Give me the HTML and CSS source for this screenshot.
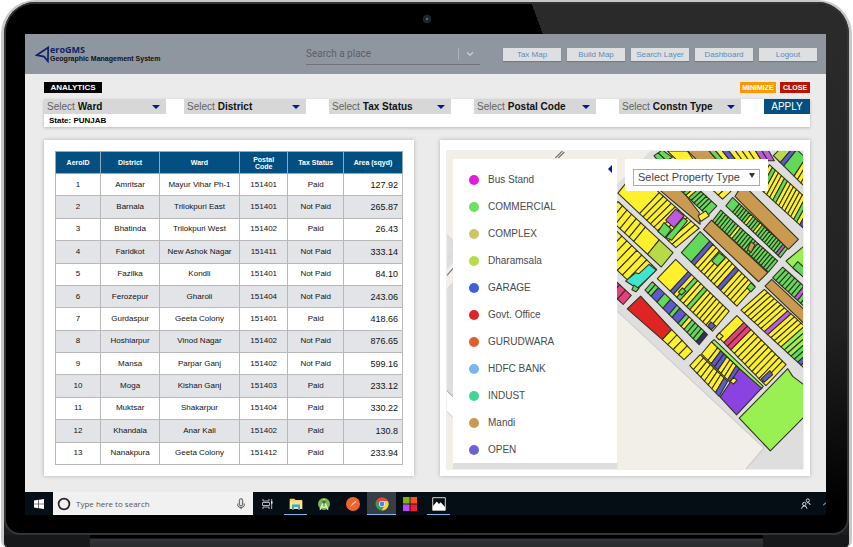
FILE: index.html
```html
<!DOCTYPE html>
<html lang="en">
<head>
<meta charset="utf-8">
<title>AeroGMS Analytics</title>
<link rel="stylesheet" href="styles.css">
</head>
<body>
<div class="laptop">
  <div class="bezel">
    <div class="camera-row"><span class="camera"></span></div>
    <div class="screen">
      <header class="topbar">
        <div class="brand">
          <svg class="brand-mark" viewBox="0 0 15 17" aria-hidden="true"><path d="M13.2 1.5 1.5 9.2l7.6 1.4 3.8 4.6z" fill="none" stroke="#0b2367" stroke-width="1.7"/></svg>
          <div class="brand-text"><strong>eroGMS</strong><span>Geographic Management System</span></div>
        </div>
        <div class="place-search">
          <input type="text" placeholder="Search a place" aria-label="Search a place">
          <button type="button" aria-label="Show places"><svg viewBox="0 0 8 6"><path d="M1 1.2 4 4.2 7 1.2" fill="none" stroke="#c9ccd1" stroke-width="1.4"/></svg></button>
        </div>
        <nav class="nav">
          <a href="#">Tax Map</a><a href="#">Build Map</a><a href="#">Search Layer</a><a href="#">Dashboard</a><a href="#">Logout</a>
        </nav>
      </header>

      <main class="content">
        <div class="title-row">
          <h1>ANALYTICS</h1>
          <div class="window-actions">
            <button type="button" class="minimize">MINIMIZE</button>
            <button type="button" class="close">CLOSE</button>
          </div>
        </div>

        <form class="filters">
          <div class="fields">
            <div class="field"><label for="ward">Select</label><select id="ward"><option>Ward</option></select><i class="arrow"></i></div>
            <div class="field"><label for="district">Select</label><select id="district"><option>District</option></select><i class="arrow"></i></div>
            <div class="field"><label for="tax">Select</label><select id="tax"><option>Tax Status</option></select><i class="arrow"></i></div>
            <div class="field"><label for="postal">Select</label><select id="postal"><option>Postal Code</option></select><i class="arrow"></i></div>
            <div class="field"><label for="constn">Select</label><select id="constn"><option>Constn Type</option></select><i class="arrow"></i></div>
            <button type="button" class="apply">APPLY</button>
          </div>
          <p class="state">State: PUNJAB</p>
        </form>

        <div class="cards">
          <section class="card table-card">
            <table>
              <colgroup><col class="c-id"><col class="c-district"><col class="c-ward"><col class="c-postal"><col class="c-tax"><col class="c-area"></colgroup>
              <thead><tr><th>AeroID</th><th>District</th><th>Ward</th><th>Postal<br>Code</th><th>Tax Status</th><th>Area (sqyd)</th></tr></thead>
              <tbody>
                <tr><td>1</td><td>Amritsar</td><td>Mayur Vihar Ph-1</td><td>151401</td><td>Paid</td><td>127.92</td></tr>
                <tr><td>2</td><td>Barnala</td><td>Trilokpuri East</td><td>151401</td><td>Not Paid</td><td>265.87</td></tr>
                <tr><td>3</td><td>Bhatinda</td><td>Trilokpuri West</td><td>151402</td><td>Paid</td><td>26.43</td></tr>
                <tr><td>4</td><td>Faridkot</td><td>New Ashok Nagar</td><td>151411</td><td>Not Paid</td><td>333.14</td></tr>
                <tr><td>5</td><td>Fazilka</td><td>Kondli</td><td>151401</td><td>Not Paid</td><td>84.10</td></tr>
                <tr><td>6</td><td>Ferozepur</td><td>Gharoli</td><td>151404</td><td>Not Paid</td><td>243.06</td></tr>
                <tr><td>7</td><td>Gurdaspur</td><td>Geeta Colony</td><td>151401</td><td>Paid</td><td>418.66</td></tr>
                <tr><td>8</td><td>Hoshiarpur</td><td>Vinod Nagar</td><td>151402</td><td>Not Paid</td><td>876.65</td></tr>
                <tr><td>9</td><td>Mansa</td><td>Parpar Ganj</td><td>151402</td><td>Not Paid</td><td>599.16</td></tr>
                <tr><td>10</td><td>Moga</td><td>Kishan Ganj</td><td>151403</td><td>Paid</td><td>233.12</td></tr>
                <tr><td>11</td><td>Muktsar</td><td>Shakarpur</td><td>151404</td><td>Paid</td><td>330.22</td></tr>
                <tr><td>12</td><td>Khandala</td><td>Anar Kali</td><td>151402</td><td>Paid</td><td>130.8</td></tr>
                <tr><td>13</td><td>Nanakpura</td><td>Geeta Colony</td><td>151412</td><td>Paid</td><td>233.94</td></tr>
              </tbody>
            </table>
          </section>

          <section class="card map-card">
            <div class="map">
              <svg class="map-drawing" viewBox="0 0 355 317" preserveAspectRatio="xMinYMin slice" role="img" aria-label="Property map">
                <rect width="355" height="317" fill="#dedede"/>
                <path d="M0 0H203L170 33V160L316 296 298 317H137L144 310H0V245L6 250V0z" fill="#f2efe9"/>
                <path d="M0 0H6V90L0 83zM0 118 6 112V132L0 138z" fill="#f2efe9"/>
                <path d="M0 84 6 89M0 107 6 101M0 138 6 132" stroke="#c8c8c8" fill="none"/>
                <path d="M0 77V84L6 89V102L0 107zM0 138 6 132V245L0 239z" fill="#dedede"/>
                <path d="M0 124 6 117M108 7 115 0M111 7 117 1" stroke="#777" stroke-width="1.2"/>
                <path d="M0 239 6 245V266L0 260z" fill="#fff"/><path d="M0 239 6 245M0 260 6 266" stroke="#aaa"/>
                <path d="M0 260 6 266V317H0z" fill="#f2efe9"/>
                <path d="M138 310H170V317H131z" fill="#dedede"/>
                <path d="M170 160 316 296 298 317" fill="none" stroke="#c9c9c9"/>
                <g id="parcels" transform="translate(163 -7) scale(.33333)" stroke="#30301c" stroke-width="3.2" stroke-linejoin="round"></g>
              </svg>
              <div class="legend">
                <button type="button" class="collapse" aria-label="Collapse legend"></button>
                <ul>
                  <li class="bus">Bus Stand</li>
                  <li class="commercial">COMMERCIAL</li>
                  <li class="complex">COMPLEX</li>
                  <li class="dharamsala">Dharamsala</li>
                  <li class="garage">GARAGE</li>
                  <li class="govt">Govt. Office</li>
                  <li class="gurudwara">GURUDWARA</li>
                  <li class="bank">HDFC BANK</li>
                  <li class="indust">INDUST</li>
                  <li class="mandi">Mandi</li>
                  <li class="open">OPEN</li>
                </ul>
              </div>
              <div class="type-picker">
                <select aria-label="Property type"><option>Select Property Type</option></select><span class="picker-arrow"></span>
              </div>
            </div>
          </section>
        </div>
      </main>

      <footer class="taskbar">
        <button type="button" class="start" aria-label="Start"><svg viewBox="0 0 10 10"><path d="M0 1.4 4.4.8V4.7H0zM5 .7 10 0V4.7H5zM0 5.3H4.4V9.2L0 8.6zM5 5.3H10V10L5 9.3z" fill="#fff"/></svg></button>
        <div class="task-search">
          <svg class="cortana" viewBox="0 0 14 14"><circle cx="7" cy="7" r="5.4" fill="none" stroke="#222" stroke-width="1.7"/></svg>
          <input type="text" placeholder="Type here to search" aria-label="Type here to search">
          <svg class="mic" viewBox="0 0 8 12"><rect x="2.3" y=".7" width="3.4" height="7.2" rx="1.7" fill="#e4e4e4" stroke="#555"/><path d="M.8 5.5V7.5Q1 9.5 4 9.5T7.2 7.5V5.5M4 9.5V11.3" fill="none" stroke="#555"/></svg>
        </div>
        <div class="apps">
          <button type="button" aria-label="Task view"><svg viewBox="0 0 14 14"><path d="M3 2V4H9V2M3 12V10H9V12M2.5 5.5H9.5V8.5H2.5zM11.7 2V12" fill="none" stroke="#c8cbd0" stroke-width=".9"/><path d="M11 4.6H12.5V6.4H11z" fill="#fff"/></svg></button>
          <button type="button" class="running" aria-label="File Explorer"><svg viewBox="0 0 14 14"><path d="M.8 1.7H5.5L6.5 3H13.2V12H.8z" fill="#f5cf62"/><path d="M.8 4H13.2V12H.8z" fill="#fde28e"/><path d="M3 12.8V7.5H11V12.8H9V10H5V12.8z" fill="#35a8e0"/></svg></button>
          <button type="button" aria-label="Android Studio"><svg viewBox="0 0 14 14"><circle cx="7" cy="7" r="6" fill="#79b84a"/><path d="M7 2V5M3 12.7 6.5 5H7.5L11 12.7M4.8 9.5Q7 11 9.2 9.5" fill="none" stroke="#e7eee2" stroke-width="1.3"/><circle cx="7" cy="5" r="1.8" fill="#456b3a"/></svg></button>
          <button type="button" aria-label="Postman"><svg viewBox="0 0 14 14"><circle cx="7" cy="7" r="7" fill="#f4622f"/><path d="M3.5 10.5 6.5 6.5 9 4.5 10.5 3.5 9.8 5.3 7.2 7.5z" fill="#ffd8c6"/></svg></button>
          <button type="button" class="running active" aria-label="Chrome"><svg viewBox="0 0 14 14"><circle cx="7" cy="7" r="6.5" fill="#32a350"/><path d="M7 7 1.4 3.7A6.5 6.5 0 0 1 12.7 3.9L7 4z" fill="#dd4b39"/><path d="M7 4H12.8A6.5 6.5 0 0 1 6.6 13.5L9.6 8.5z" fill="#fccf3d"/><path d="M7 7 1.4 3.7 4.4 8.7z" fill="#dd4b39"/><circle cx="7" cy="7" r="3" fill="#fff"/><circle cx="7" cy="7" r="2.4" fill="#4285f4"/></svg></button>
          <button type="button" aria-label="Tiles"><svg viewBox="0 0 14 14"><path d="M0 0H6.6V6.6H0z" fill="#77b900"/><path d="M7.4 0H14V6.6H7.4z" fill="#f65314"/><path d="M0 7.4H6.6V14H0z" fill="#b54bff"/><path d="M7.4 7.4H14V14H7.4z" fill="#ef1c32"/></svg></button>
          <button type="button" class="running" aria-label="Photos"><svg viewBox="0 0 14 14"><path d="M.7.7H13.3V13.3H.7z" fill="#080c10" stroke="#eee" stroke-width=".9"/><path d="M1 12V9L4.8 4.5 7 7 8.6 5.2 13 10V13H1z" fill="#fff"/></svg></button>
        </div>
        <div class="tray">
          <svg class="people" viewBox="0 0 10 12"><g fill="none" stroke="#d4d7da"><circle cx="3.3" cy="6" r="1.7"/><path d="M.6 10.8Q.8 8 3.3 8T6 10.8"/><circle cx="6.8" cy="2.5" r="1.6"/><path d="M6 4.6Q9 4.3 9.2 7"/></g></svg>
          <svg class="caret" viewBox="0 0 3 4"><path d="M0 3.5 3 .5" stroke="#d4d7da"/></svg>
        </div>
      </footer>
    </div>
  </div>
  <div class="base"></div>
</div>
<script src="map.js"></script>
</body>
</html>
```
FILE: styles.css
```css
* { box-sizing: border-box; }
body { margin: 0; background: #fff; font-family: "Liberation Sans", Arial, sans-serif; color: #000; }
button, input, select { font-family: inherit; margin: 0; padding: 0; border: 0; border-radius: 0; background: none; color: inherit; }
h1, p, ul { margin: 0; padding: 0; }
svg { display: block; }

.laptop {
  min-height: 100vh; margin: 0 1px; display: flex; flex-direction: column; overflow: hidden;
  border: 3px solid #c6c8ca; border-top-width: 2px; border-bottom: 0; border-radius: 34px 34px 6px 6px;
  background: #1d1e20;
}
.bezel {
  flex: 1; display: flex; flex-direction: column; padding: 0 21px 18px 19px;
  border: 2px solid #333538; border-radius: 31px 31px 16px 16px;
  background: linear-gradient(#2b2b2b, #222 60%, #000 95%) 100% 0 / 22px 100% no-repeat, #000;
}
.camera-row { height: 30px; margin: 0 -21px 0 -19px; display: flex; align-items: center; justify-content: center; border-radius: 29px 29px 0 0; background: linear-gradient(70deg, #000 0 63%, #2a2a2a 63% 100%); }
.camera { width: 8px; height: 8px; border-radius: 50%; background: radial-gradient(circle, #32609a 0 15%, #171b20 35%, #3e3e42); }
.screen { flex: 1; display: flex; flex-direction: column; background: #ebebeb; }

.topbar { height: 40px; display: flex; align-items: center; background: #9096a0; padding: 0 9px 0 10px; }
.brand { display: flex; align-items: center; width: 271px; }
.brand-mark { width: 15px; height: 17px; }
.brand-text { display: flex; flex-direction: column; font-size: 7px; line-height: 8px; font-weight: bold; color: #111; white-space: nowrap; }
.brand-text strong { font: bold 9px/10px "Open Sans", sans-serif; color: #0b2367; }
.place-search { width: 174px; height: 22px; display: flex; align-items: flex-end; border-bottom: 1px solid #6d727d; padding-bottom: 4px; }
.place-search input { flex: 1; min-width: 0; font: 10px/12px Roboto, sans-serif; outline: 0; }
.place-search input::placeholder { color: #5d6068; opacity: 1; }
.place-search button { width: 22px; height: 12px; border-left: 1px solid #adb1b8; display: flex; align-items: center; justify-content: center; }
.place-search button svg { width: 8px; height: 6px; }
.nav { margin-left: auto; display: flex; gap: 6px; }
.nav a { width: 58px; height: 13px; background: #dedfe1; color: #5b8db9; font-size: 8px; line-height: 14px; text-align: center; text-decoration: none; box-shadow: 0 1px 1px #777b84; white-space: nowrap; }

.content { flex: 1; display: flex; flex-direction: column; padding: 8px 16px 16px 19px; }
.title-row { display: flex; justify-content: space-between; height: 11px; }
h1 { width: 58px; background: #000; color: #fff; font-size: 8px; line-height: 11px; text-align: center; }
.window-actions { display: flex; gap: 4px; }
.window-actions button { font-size: 7px; line-height: 11px; font-weight: bold; color: #fff; text-align: center; }
.window-actions .minimize { width: 36px; background: #ff9800; }
.window-actions .close { width: 30px; background: #b71500; }

.filters { margin-top: 6px; height: 28px; background: #fff; box-shadow: 0 1px 3px #b9b9b9; }
.fields { display: grid; grid-template-columns: 140fr 145fr 145fr 145fr 145fr 46fr; height: 15px; }
.field { position: relative; display: flex; align-items: center; margin-right: 23px; padding-left: 3px; gap: 3px; background: #d7d7d7; font-size: 10px; line-height: 14px; }
.field:first-child { margin-right: 18px; }
.field label { color: #636363; }
.field select { flex: 1; min-width: 0; height: 14px; appearance: none; font-size: 10px; line-height: 14px; font-weight: bold; color: #111; }
.arrow { position: absolute; right: 6px; top: 6px; border: 4px solid transparent; border-top: 4px solid #001a93; border-bottom: 0; }
.apply { background: #024f80; color: #fff; font-size: 10px; line-height: 14px; text-align: center; }
.state { padding-left: 5px; font-size: 8px; line-height: 13px; font-weight: bold; }

.cards { flex: 1; display: grid; grid-template-columns: 370fr 370fr; gap: 26px; margin-top: 13px; }
.card { background: #fff; box-shadow: 0 0 4px #b0b0b0; }
.table-card { display: flex; padding: 11px; }
table { width: 100%; border-collapse: collapse; table-layout: fixed; border: 1px solid #999; font-size: 8px; line-height: 10px; }
.c-id { width: 13%; } .c-district { width: 17%; } .c-ward { width: 23%; } .c-postal { width: 14%; } .c-tax { width: 16%; } .c-area { width: 17%; }
th { background: #024f80; color: #fff; font-size: 7px; line-height: 7px; padding: 0; height: 22px; border: 1px solid #8faabd; }
td { padding: 0; height: 22px; border: 1px solid #b8b8b8; text-align: center; color: #111; white-space: nowrap; }
td:last-child { font-size: 9px; text-align: right; padding-right: 4px; }
tbody tr:nth-child(even) { background: #e3e4e8; }

.map-card { display: flex; padding: 11px 7px 7px; }
.map { position: relative; flex: 1; overflow: hidden; box-shadow: 0 0 1px #999; }
.map-drawing { position: absolute; width: 100%; height: 100%; }
.legend { position: absolute; left: 6px; top: 8px; width: 164px; padding: 7px 0 0 16px; background: #fff; }
.legend ul { list-style: none; }
.legend li { display: flex; align-items: center; gap: 9px; height: 27px; font-size: 10px; color: #4a4a4a; }
.legend li::before { content: ""; width: 10px; height: 10px; border-radius: 50%; background: var(--dot); }
.bus { --dot: #e31bdb; } .commercial { --dot: #6de062; } .complex { --dot: #cac566; } .dharamsala { --dot: #b8dc45; }
.garage { --dot: #3c60dc; } .govt { --dot: #e02526; } .gurudwara { --dot: #e0602b; } .bank { --dot: #7ab5ec; }
.indust { --dot: #40d890; } .mandi { --dot: #c99b52; } .open { --dot: #6c62d4; }
.collapse { position: absolute; right: 5px; top: 6px; border: 4px solid transparent; border-right: 4px solid #001a93; border-left: 0; }
.legend .collapse { border: 4px solid transparent; border-right-color: #001a93; border-left: 0; }
.type-picker { position: absolute; left: 178px; top: 8px; width: 143px; height: 32px; padding: 8px; background: #fff; }
.type-picker select { width: 100%; height: 17px; padding-left: 4px; appearance: none; border: 1px solid #aaa; font-size: 11px; line-height: 15px; color: #444; }
.picker-arrow { position: absolute; right: 13px; top: 14px; border: 3px solid transparent; border-top: 5px solid #333; border-bottom: 0; }

.taskbar { height: 23px; display: flex; background: #050d15; }
.start { width: 28px; display: flex; align-items: center; justify-content: center; }
.start svg { width: 10px; height: 10px; }
.task-search { width: 200px; display: flex; align-items: center; padding: 0 8px 0 4px; background: #f1f1f1; }
.cortana { width: 14px; height: 14px; }
.task-search input { flex: 1; min-width: 0; margin-left: 5px; font: 8px/12px "Open Sans", sans-serif; outline: 0; }
.task-search input::placeholder { color: #555; opacity: 1; }
.mic { width: 8px; height: 12px; }
.apps { width: 200px; display: flex; }
.apps button { flex: 1; display: flex; align-items: center; justify-content: center; }
.apps svg { width: 14px; height: 14px; }
.apps .running { background: linear-gradient(#76b9ed, #76b9ed) 50% 100% / 23px 1px no-repeat; }
.apps .active { background: linear-gradient(#76b9ed, #76b9ed) 0 100% / 100% 1px no-repeat, #373e45; }
.tray { margin-left: auto; display: flex; align-items: center; gap: 12px; }
.people { width: 10px; height: 12px; }
.caret { width: 3px; height: 4px; }

.base { height: 12px; margin: 0; background: linear-gradient(90deg, #17181a 0 86px, transparent 86px calc(100% - 86px), #17181a calc(100% - 86px)), linear-gradient(#000 0 3px, #343538 4px, #2a2b2d); }
```
FILE: map.js
```js
const colors = {
  y: "#fff02e", g: "#62d95c", b: "#5d59cf", n: "#c99a50", p: "#bd5ae0", k: "#e83f7c",
  r: "#e02424", o: "#b5db46", l: "#98f052", c: "#40e5cf", v: "#8a42e0", d: "#33305f"
};
const layer = document.getElementById("parcels");

function shape(points, color) {
  const el = document.createElementNS("http://www.w3.org/2000/svg", "polygon");
  el.setAttribute("points", points);
  el.setAttribute("fill", colors[color]);
  layer.append(el);
}

// Splits a block into side-by-side lots; a digit after a letter widens that lot.
function block(a, b, c, d, lots) {
  const parts = lots.match(/[a-z]\d*/g).map(s => [s[0], Number(s.slice(1)) || 1]);
  const total = parts.reduce((sum, part) => sum + part[1], 0);
  const mix = (p, q, t) => [p[0] + (q[0] - p[0]) * t, p[1] + (q[1] - p[1]) * t];
  let at = 0;
  for (const [color, size] of parts) {
    const s = at / total, e = (at += size) / total;
    shape([mix(a, b, s), mix(a, b, e), mix(d, c, e), mix(d, c, s)].join(" "), color);
  }
}

block([75,82],[265,252],[195,310],[22,147], "y6yyyyyyyyyy");
shape("195,195 220,215 190,250 165,228", "p");
shape("160,235 182,255 163,280 142,262", "g");
shape("218,220 230,230 183,288 165,280 192,250", "g");
block([22,172],[187,325],[152,368],[-13,215], "yyyyyyy3o3");
block([-40,205],[138,375],[80,435],[-98,265], "yyyyyyyyyyyy");
shape("75,385 85,388 115,360 137,377 80,432 45,410", "c");
shape("70,422 85,432 76,442 64,436", "g");
block([10,405],[62,453],[38,480],[-14,432], "kkk");
block([125,412],[290,570],[265,600],[103,437], "ggb2g2b2gb2gyggggd");
shape("90,455 183,555 155,585 50,493", "r");
block([183,555],[245,620],[220,645],[155,585], "yyyy");
block([195,345],[355,500],[305,560],[140,403], "y4bygyygyyyyyyy");
shape("215,430 225,440 212,452 203,443", "g");
shape("300,532 314,543 302,555 291,545", "b");
block([268,262],[432,425],[378,485],[212,325], "g3byyyyyyybyyyyy");
shape("325,325 343,340 320,365 303,350", "g");
shape("420,415 433,428 420,442 408,430", "g");
shape("302,228 470,385 443,412 278,255", "n");
block([330,198],[500,350],[472,383],[305,230], "gggggggyggggggggggggggg");
shape("420,292 432,302 420,325 410,315", "n");
block([365,160],[530,312],[508,340],[345,185], "g3gggggygggygggggggggpg");
shape("395,120 562,285 532,315 372,157", "n");
block([475,62],[655,226],[620,291],[440,127], "ygyyygyyyyyygybyyyyy");
block([530,-8],[620,75],[590,137],[487,35], "o2bg3yyyg");
shape("150,108 190,108 265,205 268,240 150,140", "n");
block([215,92],[318,185],[290,215],[185,115], "ggpggygggggg2");
shape("262,215 285,200 295,215 270,232", "y");
block([265,60],[360,142],[335,165],[245,80], "gygyyyy");
block([130,35],[155,18],[185,40],[150,60], "gg");
shape("170,21 230,21 250,50 200,50", "y");
shape("225,15 290,15 320,50 260,50", "n");
block([290,15],[470,15],[490,50],[320,50], "gybyyyypp");
shape("525,350 585,300 585,400 555,380", "l");
shape("545,370 560,352 590,380 590,410", "g");
block([515,368],[605,450],[578,485],[485,400], "gggggggpgg");
shape("482,405 590,505 590,548 462,425", "n");
block([460,435],[660,618],[590,680],[390,497], "yyyyyyypyyyylllggbyp");
block([378,513],[525,660],[465,723],[318,573], "y2kkyyyyyyyyyy");
shape("477,678 485,690 460,712 450,703", "b");
shape("325,565 337,575 325,586 316,577", "y");
shape("310,585 457,725 450,733 302,592", "l");
block([302,592],[385,672],[360,715],[272,628], "y2ybbyyyb");
block([268,630],[350,710],[325,755],[237,663], "yyyyyyyb");
shape("385,672 452,730 377,810 328,757", "v");
shape("368,698 378,706 368,718 358,710", "y");
shape("530,672 545,695 585,725 585,810 478,918 385,820", "l");
```
